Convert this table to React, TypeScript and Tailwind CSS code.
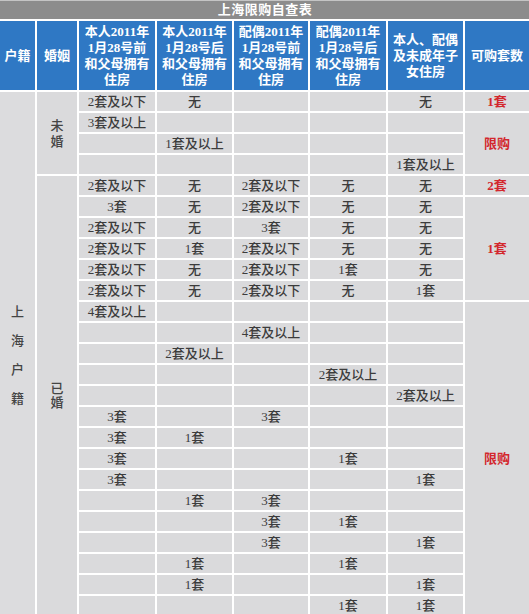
const font = { fontFamily: "'Liberation Serif', 'Noto Sans CJK SC', serif" };

const headers: string[][] = [
  ["本人2011年", "1月28号前", "和父母拥有", "住房"],
  ["本人2011年", "1月28号后", "和父母拥有", "住房"],
  ["配偶2011年", "1月28号前", "和父母拥有", "住房"],
  ["配偶2011年", "1月28号后", "和父母拥有", "住房"],
  ["本人、配偶", "及未成年子", "女住房"],
];

// five data columns per row
const single: string[][] = [
  ["2套及以下", "无", "", "", "无"],
  ["3套及以上", "", "", "", ""],
  ["", "1套及以上", "", "", ""],
  ["", "", "", "", "1套及以上"],
];

const married: string[][] = [
  ["2套及以下", "无", "2套及以下", "无", "无"],
  ["3套", "无", "2套及以下", "无", "无"],
  ["2套及以下", "无", "3套", "无", "无"],
  ["2套及以下", "1套", "2套及以下", "无", "无"],
  ["2套及以下", "无", "2套及以下", "1套", "无"],
  ["2套及以下", "无", "2套及以下", "无", "1套"],
  ["4套及以上", "", "", "", ""],
  ["", "", "4套及以上", "", ""],
  ["", "2套及以上", "", "", ""],
  ["", "", "", "2套及以上", ""],
  ["", "", "", "", "2套及以上"],
  ["3套", "", "3套", "", ""],
  ["3套", "1套", "", "", ""],
  ["3套", "", "", "1套", ""],
  ["3套", "", "", "", "1套"],
  ["", "1套", "3套", "", ""],
  ["", "", "3套", "1套", ""],
  ["", "", "3套", "", "1套"],
  ["", "1套", "", "1套", ""],
  ["", "1套", "", "", "1套"],
  ["", "", "", "1套", "1套"],
];

// result column: [text, startRow, span]
const results: [string, number, number][] = [
  ["1套", 0, 1],
  ["限购", 1, 3],
  ["2套", 4, 1],
  ["1套", 5, 5],
  ["限购", 10, 15],
];

const rowStart = ["row-start-3", "row-start-4", "row-start-5", "row-start-6", "row-start-7", "row-start-8", "row-start-9", "row-start-10", "row-start-11", "row-start-12", "row-start-13", "row-start-14", "row-start-15", "row-start-16", "row-start-17", "row-start-18", "row-start-19", "row-start-20", "row-start-21", "row-start-22", "row-start-23", "row-start-24", "row-start-25", "row-start-26", "row-start-27"];
const rowSpan: Record<number, string> = { 1: "row-span-1", 3: "row-span-3", 4: "row-span-4", 5: "row-span-5", 15: "row-span-15", 21: "row-span-21", 25: "row-span-25" };

export default function App() {
  const rows = [...single, ...married];
  return (
    <div className="w-[529px] h-[614px] overflow-hidden bg-white" style={font}>
      <div className="grid grid-cols-[35px_40px_76px_75px_74px_76px_75px_64px] grid-rows-[19px_69px_repeat(25,19px)] gap-[2px] bg-white">
        <div className="col-span-8 bg-[#8c8c8c] border-t border-[#c4c4c4] flex items-center justify-center pl-[1px] text-white text-[13px] font-bold tracking-[0.5px]">
          上海限购自查表
        </div>

        <div className="bg-[#2f78c4] flex items-center justify-center text-white text-[13px] font-bold">户籍</div>
        <div className="bg-[#2f78c4] flex items-center justify-center text-white text-[13px] font-bold">婚姻</div>
        {headers.map((h, i) => (
          <div key={i} className="bg-[#2f78c4] flex flex-col items-center justify-center text-white text-[13px] font-bold leading-[16px]">
            {h.map((l, j) => (
              <span key={j}>{l}</span>
            ))}
          </div>
        ))}
        <div className="bg-[#2f78c4] flex items-center justify-center text-white text-[13px] font-bold">可购套数</div>

        <div className="col-start-1 row-start-3 row-span-25 bg-[#dcdcde] flex flex-col items-center justify-center text-[#444] text-[13px] font-medium leading-[29px] pt-[2px]">
          {"上海户籍".split("").map((c) => (
            <span key={c}>{c}</span>
          ))}
        </div>
        <div className="col-start-2 row-start-3 row-span-4 bg-[#dadadc] flex flex-col items-center justify-center text-[#444] text-[13px] font-medium leading-[16px] pt-[2px]">
          <span>未</span>
          <span>婚</span>
        </div>
        <div className="col-start-2 row-start-7 row-span-21 bg-[#dadadc] flex flex-col items-center justify-center text-[#444] text-[13px] font-medium leading-[14px]">
          <span>已</span>
          <span>婚</span>
        </div>

        {rows.map((r, i) =>
          r.map((c, j) => (
            <div
              key={`${i}-${j}`}
              className={`${rowStart[i]} bg-[#dadadc] flex items-center justify-center text-[#3c3c3c] text-[13px] font-medium leading-none`}
            >
              {c}
            </div>
          ))
        )}

        {results.map(([t, s, n], i) => (
          <div
            key={i}
            className={`col-start-8 ${rowStart[s]} ${rowSpan[n]} bg-[#dadadc] flex items-center justify-center text-[#d3272d] text-[13px] font-bold`}
          >
            {t}
          </div>
        ))}
      </div>
    </div>
  );
}
